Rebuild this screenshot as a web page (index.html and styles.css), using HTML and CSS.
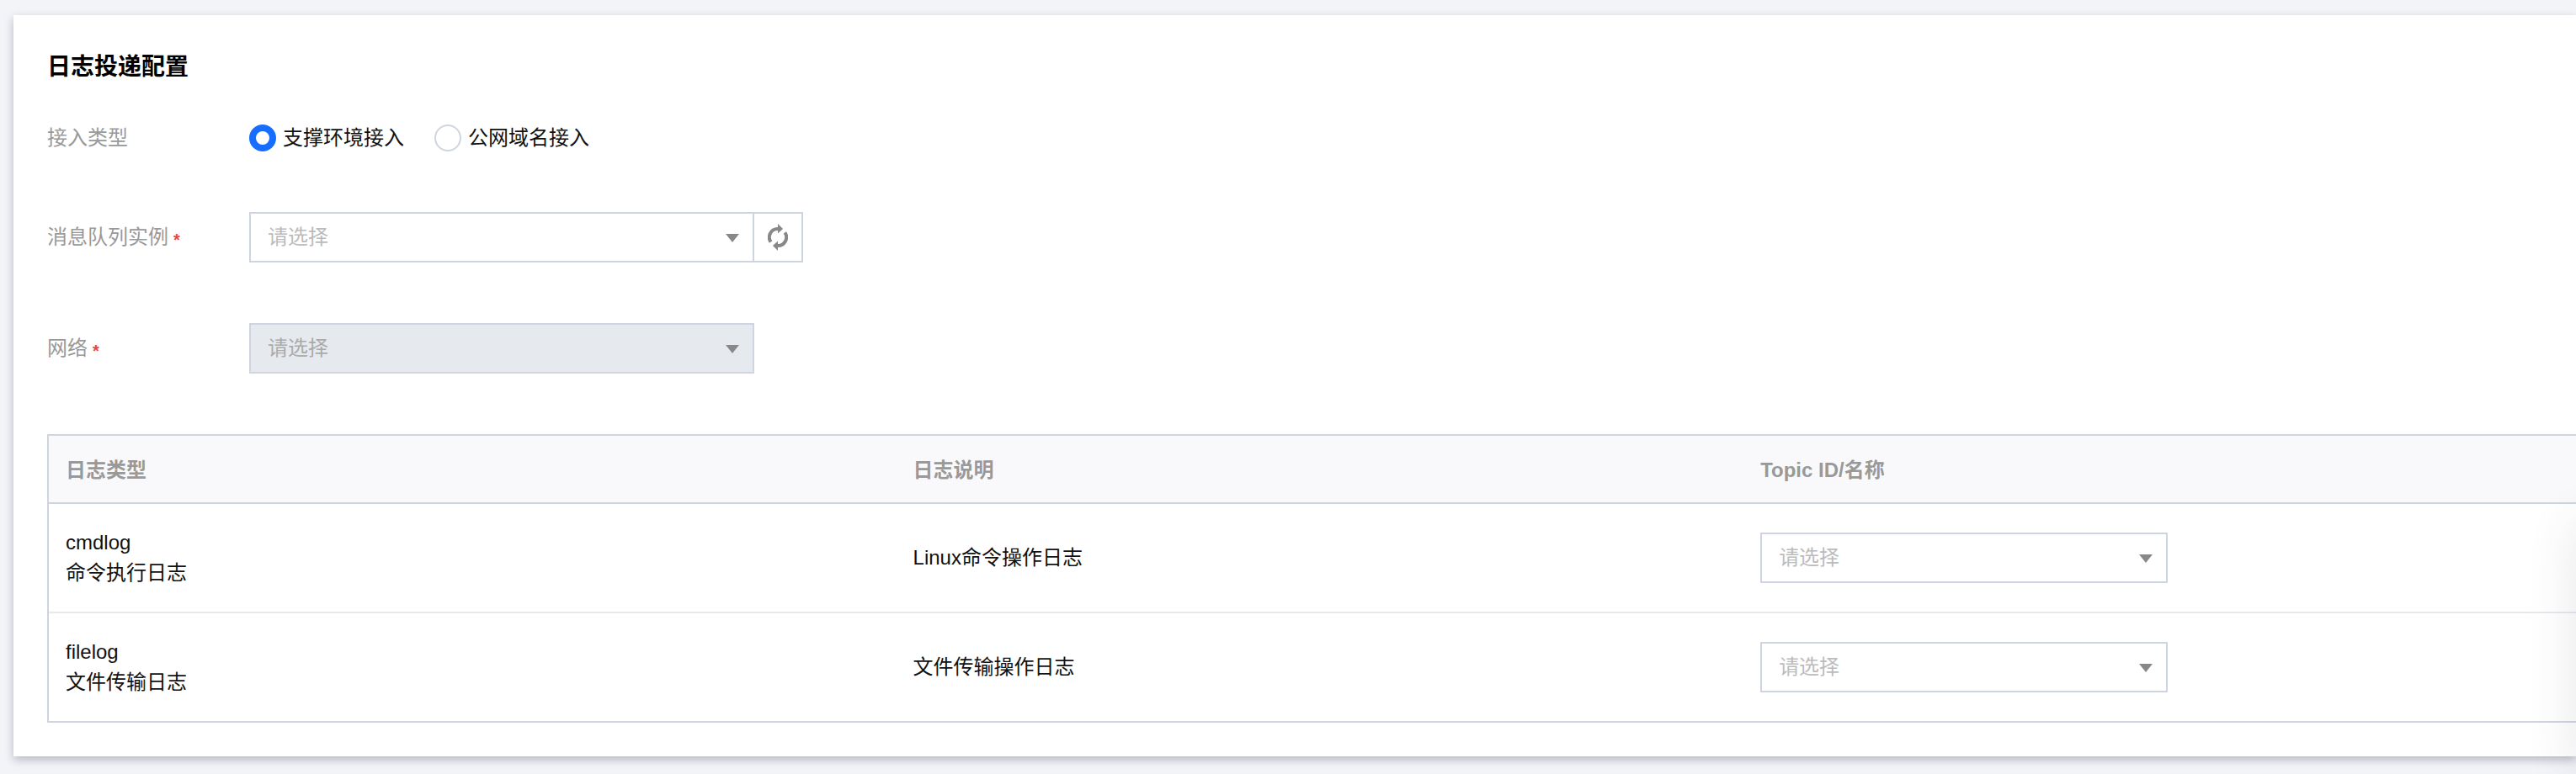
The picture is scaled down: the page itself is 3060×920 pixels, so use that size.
FILE: index.html
```html
<!DOCTYPE html>
<html lang="zh-CN">
<head>
    <meta charset="UTF-8">
    <meta name="viewport" content="width=device-width, initial-scale=1.0">
    <title>日志投递配置</title>
    <link rel="stylesheet" href="styles.css">
</head>
<body>
    <main class="card">
        <h1>日志投递配置</h1>

        <form class="form">
            <div class="form-row" role="radiogroup" aria-labelledby="access-label">
                <span class="form-label" id="access-label">接入类型</span>
                <div class="radio-group">
                    <label class="radio"><input type="radio" name="access" value="support" checked>支撑环境接入</label>
                    <label class="radio"><input type="radio" name="access" value="public">公网域名接入</label>
                </div>
            </div>

            <div class="form-row">
                <label class="form-label" for="instance">消息队列实例<span class="required">*</span></label>
                <div class="form-control">
                    <div class="select select-form">
                        <select id="instance">
                            <option value="">请选择</option>
                        </select>
                    </div>
                    <button type="button" class="refresh" aria-label="刷新">
                        <svg width="24" height="32" viewBox="0 0 24 32">
                            <g id="arrow">
                                <path d="M12 6A10 10 0 0 0 3.6 21.6" fill="none" stroke="#888" stroke-width="4"/>
                                <path d="M12 0L18 6L12 11.5Z" fill="#888"/>
                            </g>
                            <use href="#arrow" transform="rotate(180 12 16)"/>
                        </svg>
                    </button>
                </div>
            </div>

            <div class="form-row">
                <label class="form-label" for="network">网络<span class="required">*</span></label>
                <div class="form-control">
                    <div class="select select-form">
                        <select id="network" disabled>
                            <option value="">请选择</option>
                        </select>
                    </div>
                </div>
            </div>
        </form>

        <table class="log-table">
            <thead>
                <tr>
                    <th>日志类型</th>
                    <th>日志说明</th>
                    <th>Topic ID/名称</th>
                </tr>
            </thead>
            <tbody>
                <tr>
                    <td>cmdlog<br>命令执行日志</td>
                    <td>Linux命令操作日志</td>
                    <td>
                        <div class="select select-topic">
                            <select aria-label="cmdlog Topic">
                                <option value="">请选择</option>
                            </select>
                        </div>
                    </td>
                </tr>
                <tr>
                    <td>filelog<br>文件传输日志</td>
                    <td>文件传输操作日志</td>
                    <td>
                        <div class="select select-topic">
                            <select aria-label="filelog Topic">
                                <option value="">请选择</option>
                            </select>
                        </div>
                    </td>
                </tr>
            </tbody>
        </table>
    </main>

    <!-- floating toolbar, collapsed past the window edge -->
    <div class="side-bar"></div>
</body>
</html>
```
FILE: styles.css
```css
* {
    box-sizing: border-box;
}
body {
    margin: 0;
    padding: 18px 0 21px 16px;
    background: #f3f4f8;
    color: #111;
    font-family: "Liberation Sans", "Noto Sans CJK SC", sans-serif;
    font-size: 24px;
    line-height: 36px;
    overflow-x: hidden;
}
.card {
    padding: 40px 0 40px 40px;
    background: #fff;
    box-shadow: 0 4px 10px rgba(54, 58, 80, 0.32);
}
h1 {
    margin: 0 0 46px;
    color: #000;
    font-size: 28px;
    font-weight: bold;
    line-height: 44px;
}
.form {
    display: flex;
    flex-direction: column;
    gap: 72px;
    margin-bottom: 72px;
}
.form-row {
    display: grid;
    grid-template-columns: 240px 1fr;
    align-items: center;
}
.form-label {
    color: #999;
    line-height: 32px;
}
.required {
    margin-left: 6px;
    color: #e54545;
    font-size: 20px;
    font-weight: bold;
    line-height: 1;
    vertical-align: -2px;
}
.radio-group {
    display: flex;
    gap: 36px;
}
.radio {
    display: flex;
    align-items: center;
    gap: 8px;
    height: 32px;
}
.radio input {
    appearance: none;
    width: 32px;
    height: 32px;
    margin: 0;
    border: 2px solid #cfd5e0;
    border-radius: 50%;
    background: #fff;
}
.radio input:checked {
    border: 8px solid #166dff;
}
.form-control {
    display: flex;
}
.select {
    position: relative;
}
.select-form {
    width: 600px;
}
.select-topic {
    width: 484px;
}
.select::after {
    content: "";
    position: absolute;
    top: 26px;
    right: 18px;
    border: 8px solid transparent;
    border-top: 10px solid #888;
    border-bottom: 0;
    pointer-events: none;
}
.select select {
    display: block;
    appearance: none;
    width: 100%;
    height: 60px;
    padding: 0 20px;
    border: 2px solid #cfd5e0;
    border-radius: 0;
    background: #fff;
    color: #bbb;
    font: inherit;
}
.select select:disabled {
    background: #e6e9ee;
    color: #aaa;
    opacity: 1;
}
.refresh {
    display: flex;
    align-items: center;
    justify-content: center;
    width: 60px;
    height: 60px;
    margin-left: -2px;
    padding: 0;
    border: 2px solid #cfd5e0;
    background: #fff;
}
.log-table {
    width: 100%;
    table-layout: fixed;
    border: 2px solid #cfd5e0;
    border-right: 0;
    border-spacing: 0;
}
.log-table th {
    height: 81px;
    padding: 2px 20px 0;
    border-bottom: 2px solid #cfd5e0;
    background: #f9f9fb;
    color: #999;
    font-weight: bold;
    text-align: left;
}
/* the last column is a little narrower than the others */
.log-table th:nth-child(-n+2) {
    width: 33.53%;
}
.log-table td {
    height: 128px;
    padding: 0 20px;
}
.log-table tr:first-child td {
    height: 130px;
    border-bottom: 2px solid #e5e8ed;
}
.side-bar {
    position: fixed;
    top: 620px;
    bottom: 0;
    left: 100%;
    width: 60px;
    box-shadow: 0 0 60px rgba(54, 58, 80, 0.12);
}
```
